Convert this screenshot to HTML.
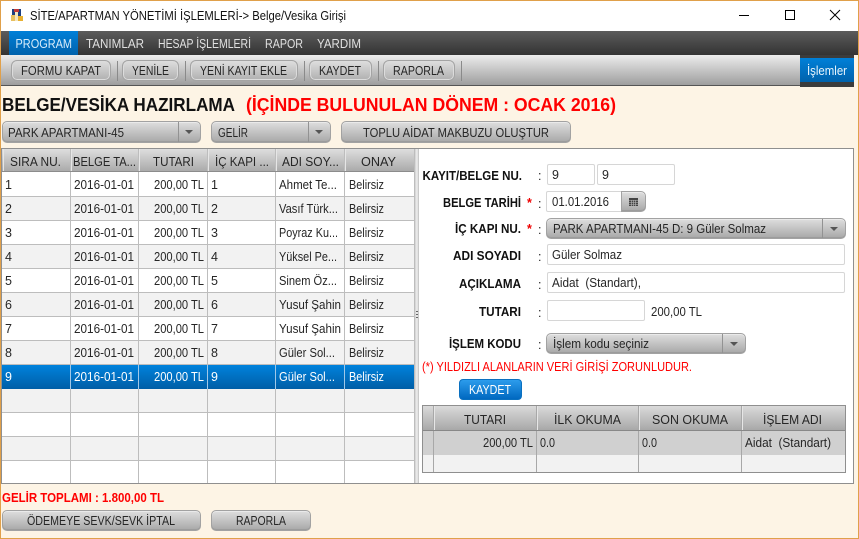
<!DOCTYPE html>
<html><head><meta charset="utf-8"><style>
html,body{margin:0;padding:0}
body{width:859px;height:539px;position:relative;overflow:hidden;background:#fdf4e5}
.b{position:absolute;box-sizing:border-box}
.btn{background:linear-gradient(#dedede,#a8a8a8);border:1px solid #a2a2a2;border-radius:5px;box-shadow:inset 0 1px 0 #eaeaea,inset 0 -1px 0 #9c9c9c}
.tb{background:linear-gradient(#dedede,#b0b0b0);border:1px solid #a4a4a4;border-radius:6px;box-shadow:inset 0 0 0 1px #dcdcdc}
.in{background:#fff;border:1px solid #d6d6d6;border-radius:2px}
.sep{position:absolute;width:1px;top:61px;height:20px;background:#8a8a8a}
.arw{position:absolute;width:0;height:0;border-left:4px solid transparent;border-right:4px solid transparent;border-top:4px solid #555}
.ad{position:absolute;width:1px;background:#929292}
svg.o{position:absolute;left:0;top:0}
svg text{font-family:"Liberation Sans",sans-serif;font-size:12.5px;fill:#262626;white-space:pre}
.x{font-weight:bold;fill:#111}
.r{fill:#f00}
</style></head><body>
<div class="b" style="left:0;top:0;width:859px;height:539px;border:1px solid #e0a04a;z-index:5;pointer-events:none"></div>
<div class="b" style="left:1px;top:1px;width:857px;height:30px;background:#fff"></div>
<div class="b" style="left:1px;top:31px;width:857px;height:24px;background:linear-gradient(#5c5c5c,#333)"></div>
<div class="b" style="left:9px;top:31px;width:69px;height:24px;background:linear-gradient(#0080d8,#0062ac)"></div>
<div class="b" style="left:1px;top:55px;width:853px;height:31px;background:linear-gradient(#ececec,#9e9e9e);border-bottom:1px solid #555"></div>
<div class="b tb" style="left:11px;top:60px;width:100px;height:21px"></div><div class="sep" style="left:117px"></div>
<div class="b tb" style="left:122px;top:60px;width:57px;height:21px"></div><div class="sep" style="left:185px"></div>
<div class="b tb" style="left:190px;top:60px;width:108px;height:21px"></div><div class="sep" style="left:304px"></div>
<div class="b tb" style="left:309px;top:60px;width:63px;height:21px"></div><div class="sep" style="left:378px"></div>
<div class="b tb" style="left:383px;top:60px;width:72px;height:21px"></div><div class="sep" style="left:461px"></div>
<div class="b" style="left:800px;top:55px;width:54px;height:32px;background:#3c3c3c"></div>
<div class="b" style="left:800px;top:58px;width:54px;height:24px;background:linear-gradient(#0080d8,#0062ac)"></div>
<svg class="o" style="z-index:1" width="30" height="30"><rect x="12" y="9" width="9" height="8" fill="#1c3f80"/><rect x="14" y="9" width="5" height="3" fill="#c23a3a"/><rect x="11" y="15" width="4" height="6" fill="#e8c060"/><rect x="15" y="12" width="3" height="9" fill="#f4e6c0"/><rect x="18" y="16" width="5" height="5" fill="#e8b030"/></svg>

<div class="b btn" style="left:2px;top:121px;width:199px;height:22px"></div><div class="ad" style="left:178px;top:122px;height:20px"></div><div class="arw" style="left:185px;top:130px"></div>
<div class="b btn" style="left:211px;top:121px;width:120px;height:22px"></div><div class="ad" style="left:308px;top:122px;height:20px"></div><div class="arw" style="left:315px;top:130px"></div>
<div class="b btn" style="left:341px;top:121px;width:230px;height:22px"></div>

<div class="b" style="left:1px;top:148px;width:853px;height:336px;background:#fff;border:1px solid #8f8f8f"></div>
<div class="b" style="left:2px;top:149px;width:412px;height:23px;background:linear-gradient(#dedede,#a8a8a8)"></div>
<div class="b" style="left:2px;top:197px;width:412px;height:24px;background:#f2f2f2"></div>
<div class="b" style="left:2px;top:245px;width:412px;height:24px;background:#f2f2f2"></div>
<div class="b" style="left:2px;top:293px;width:412px;height:24px;background:#f2f2f2"></div>
<div class="b" style="left:2px;top:341px;width:412px;height:24px;background:#f2f2f2"></div>
<div class="b" style="left:2px;top:389px;width:412px;height:24px;background:#f2f2f2"></div>
<div class="b" style="left:2px;top:437px;width:412px;height:24px;background:#f2f2f2"></div>
<svg class="o" style="z-index:1" width="859" height="539"><g stroke="#bdbdbd" stroke-width="1" shape-rendering="crispEdges">
<path d="M2 196.500H414M2 220.500H414M2 244.500H414M2 268.500H414M2 292.500H414M2 316.500H414M2 340.500H414M2 364.500H414M2 412.500H414M2 436.500H414M2 460.500H414"/>
<path d="M70.500 149V483M138.500 149V483M207.500 149V483M275.500 149V483M344.500 149V483M414.500 149V483"/></g>
<path stroke="#e6e6e6" d="M71.500 149V171M139.500 149V171M208.500 149V171M276.500 149V171M345.500 149V171M3.500 149V171" shape-rendering="crispEdges"/>
<path stroke="#8c8c8c" d="M2 171.500H414" shape-rendering="crispEdges"/></svg>
<div class="b" style="left:2px;top:365px;width:412px;height:24px;background:linear-gradient(#0082dc,#005ea6);z-index:2"></div>
<svg class="o" style="z-index:2" width="859" height="539"><path stroke="#a0c8e8" d="M70.500 365V389M138.500 365V389M207.500 365V389M275.500 365V389M344.500 365V389" shape-rendering="crispEdges"/></svg>

<div class="b" style="left:415px;top:149px;width:4px;height:334px;background:linear-gradient(90deg,#d0d0d0,#f0f0f0,#bcbcbc)"></div>
<div class="b" style="left:416px;top:311px;width:2px;height:8px;background:repeating-linear-gradient(#666 0 1px,transparent 1px 3px)"></div>

<div class="b in" style="left:547px;top:164px;width:48px;height:21px"></div>
<div class="b in" style="left:597px;top:164px;width:78px;height:21px"></div>
<div class="b in" style="left:546px;top:191px;width:80px;height:21px"></div>
<div class="b btn" style="left:621px;top:191px;width:25px;height:21px;border-radius:0 5px 5px 0"></div>
<svg class="o" style="z-index:1" width="859" height="539"><rect x="629" y="198" width="9" height="8" fill="#444"/><path d="M629 200.500H638M629 202.500H638M629 204.500H638M631.500 200V206M633.500 200V206M635.500 200V206" stroke="#bbb" stroke-width=".6"/></svg>
<div class="b btn" style="left:546px;top:218px;width:300px;height:21px"></div><div class="ad" style="left:822px;top:219px;height:19px"></div><div class="arw" style="left:830px;top:227px"></div>
<div class="b in" style="left:547px;top:244px;width:298px;height:21px"></div>
<div class="b in" style="left:547px;top:272px;width:298px;height:21px"></div>
<div class="b in" style="left:547px;top:300px;width:98px;height:21px"></div>
<div class="b btn" style="left:546px;top:333px;width:200px;height:21px"></div><div class="ad" style="left:722px;top:334px;height:19px"></div><div class="arw" style="left:730px;top:342px"></div>
<div class="b" style="left:459px;top:379px;width:63px;height:21px;border-radius:4px;background:linear-gradient(#2c9cec,#0068c0);border:1px solid #0a70c0"></div>

<div class="b" style="left:422px;top:405px;width:424px;height:68px;background:#fff;border:1px solid #8f8f8f"></div>
<div class="b" style="left:423px;top:406px;width:422px;height:25px;background:linear-gradient(#dadada,#a6a6a6)"></div>
<div class="b" style="left:423px;top:431px;width:422px;height:24px;background:#d0d0d0"></div>
<div class="b" style="left:423px;top:455px;width:422px;height:17px;background:#f2f2f2"></div>
<svg class="o" style="z-index:1" width="859" height="539"><path stroke="#a8a8a8" d="M433.500 406V472M536.500 406V472M638.500 406V472M741.500 406V472" shape-rendering="crispEdges"/><path stroke="#e6e6e6" d="M434.500 406V430M537.500 406V430M639.500 406V430M742.500 406V430" shape-rendering="crispEdges"/><path stroke="#888" d="M423 430.500H845" shape-rendering="crispEdges"/></svg>

<div class="b btn" style="left:2px;top:510px;width:199px;height:21px"></div>
<div class="b btn" style="left:211px;top:510px;width:100px;height:21px"></div>

<svg class="o" style="z-index:3" width="859" height="539">
<g stroke="#000" fill="none" stroke-width="1"><path d="M739 15.500H749" shape-rendering="crispEdges"/><rect x="785.500" y="10.500" width="9" height="9" shape-rendering="crispEdges"/><path d="M830 10L840 20M840 10L830 20"/></g>
<text x="30" y="20" textLength="316" lengthAdjust="spacingAndGlyphs" style="fill:#111">SİTE/APARTMAN YÖNETİMİ İŞLEMLERİ-&gt; Belge/Vesika Girişi</text>
<text x="15.500" y="48" textLength="56.500" lengthAdjust="spacingAndGlyphs" style="fill:#d8ecfa">PROGRAM</text>
<text x="86" y="48" textLength="58" lengthAdjust="spacingAndGlyphs" style="fill:#e0e0e0">TANIMLAR</text>
<text x="158" y="48" textLength="93" lengthAdjust="spacingAndGlyphs" style="fill:#e0e0e0">HESAP İŞLEMLERİ</text>
<text x="265" y="48" textLength="38" lengthAdjust="spacingAndGlyphs" style="fill:#e0e0e0">RAPOR</text>
<text x="317" y="48" textLength="44" lengthAdjust="spacingAndGlyphs" style="fill:#e0e0e0">YARDIM</text>
<text x="21" y="75" textLength="80" lengthAdjust="spacingAndGlyphs">FORMU KAPAT</text>
<text x="132" y="75" textLength="37" lengthAdjust="spacingAndGlyphs">YENİLE</text>
<text x="200" y="75" textLength="87" lengthAdjust="spacingAndGlyphs">YENİ KAYIT EKLE</text>
<text x="319" y="75" textLength="42" lengthAdjust="spacingAndGlyphs">KAYDET</text>
<text x="393" y="75" textLength="51" lengthAdjust="spacingAndGlyphs">RAPORLA</text>
<text x="807" y="75" textLength="40" lengthAdjust="spacingAndGlyphs" style="fill:#e8f4fc">İşlemler</text>
<text class="x" x="2" y="111" textLength="233" lengthAdjust="spacingAndGlyphs" style="font-size:18px">BELGE/VESİKA HAZIRLAMA</text>
<text class="x r" x="246" y="111" textLength="370" lengthAdjust="spacingAndGlyphs" style="font-size:18px;fill:#f00">(İÇİNDE BULUNULAN DÖNEM : OCAK 2016)</text>
<text x="8" y="137" textLength="116" lengthAdjust="spacingAndGlyphs">PARK APARTMANI-45</text>
<text x="218" y="137" textLength="30" lengthAdjust="spacingAndGlyphs">GELİR</text>
<text x="363" y="137" textLength="186" lengthAdjust="spacingAndGlyphs">TOPLU AİDAT MAKBUZU OLUŞTUR</text>

<text x="10" y="166" textLength="51" lengthAdjust="spacingAndGlyphs">SIRA NU.</text>
<text x="73" y="166" textLength="63" lengthAdjust="spacingAndGlyphs">BELGE TA...</text>
<text x="153" y="166" textLength="41" lengthAdjust="spacingAndGlyphs">TUTARI</text>
<text x="215" y="166" textLength="54" lengthAdjust="spacingAndGlyphs">İÇ KAPI ...</text>
<text x="282" y="166" textLength="57" lengthAdjust="spacingAndGlyphs">ADI SOY...</text>
<text x="361" y="166" textLength="35" lengthAdjust="spacingAndGlyphs">ONAY</text>

<text x="5" y="189">1</text><text x="74" y="189" textLength="60" lengthAdjust="spacingAndGlyphs">2016-01-01</text><text x="154" y="189" textLength="50" lengthAdjust="spacingAndGlyphs">200,00 TL</text><text x="211" y="189">1</text><text x="279" y="189" textLength="58" lengthAdjust="spacingAndGlyphs">Ahmet Te...</text><text x="349" y="189" textLength="35" lengthAdjust="spacingAndGlyphs">Belirsiz</text>
<text x="5" y="213">2</text><text x="74" y="213" textLength="60" lengthAdjust="spacingAndGlyphs">2016-01-01</text><text x="154" y="213" textLength="50" lengthAdjust="spacingAndGlyphs">200,00 TL</text><text x="211" y="213">2</text><text x="279" y="213" textLength="59" lengthAdjust="spacingAndGlyphs">Vasıf Türk...</text><text x="349" y="213" textLength="35" lengthAdjust="spacingAndGlyphs">Belirsiz</text>
<text x="5" y="237">3</text><text x="74" y="237" textLength="60" lengthAdjust="spacingAndGlyphs">2016-01-01</text><text x="154" y="237" textLength="50" lengthAdjust="spacingAndGlyphs">200,00 TL</text><text x="211" y="237">3</text><text x="279" y="237" textLength="59" lengthAdjust="spacingAndGlyphs">Poyraz Ku...</text><text x="349" y="237" textLength="35" lengthAdjust="spacingAndGlyphs">Belirsiz</text>
<text x="5" y="261">4</text><text x="74" y="261" textLength="60" lengthAdjust="spacingAndGlyphs">2016-01-01</text><text x="154" y="261" textLength="50" lengthAdjust="spacingAndGlyphs">200,00 TL</text><text x="211" y="261">4</text><text x="279" y="261" textLength="58" lengthAdjust="spacingAndGlyphs">Yüksel Pe...</text><text x="349" y="261" textLength="35" lengthAdjust="spacingAndGlyphs">Belirsiz</text>
<text x="5" y="285">5</text><text x="74" y="285" textLength="60" lengthAdjust="spacingAndGlyphs">2016-01-01</text><text x="154" y="285" textLength="50" lengthAdjust="spacingAndGlyphs">200,00 TL</text><text x="211" y="285">5</text><text x="279" y="285" textLength="58" lengthAdjust="spacingAndGlyphs">Sinem Öz...</text><text x="349" y="285" textLength="35" lengthAdjust="spacingAndGlyphs">Belirsiz</text>
<text x="5" y="309">6</text><text x="74" y="309" textLength="60" lengthAdjust="spacingAndGlyphs">2016-01-01</text><text x="154" y="309" textLength="50" lengthAdjust="spacingAndGlyphs">200,00 TL</text><text x="211" y="309">6</text><text x="279" y="309" textLength="62" lengthAdjust="spacingAndGlyphs">Yusuf Şahin</text><text x="349" y="309" textLength="35" lengthAdjust="spacingAndGlyphs">Belirsiz</text>
<text x="5" y="333">7</text><text x="74" y="333" textLength="60" lengthAdjust="spacingAndGlyphs">2016-01-01</text><text x="154" y="333" textLength="50" lengthAdjust="spacingAndGlyphs">200,00 TL</text><text x="211" y="333">7</text><text x="279" y="333" textLength="62" lengthAdjust="spacingAndGlyphs">Yusuf Şahin</text><text x="349" y="333" textLength="35" lengthAdjust="spacingAndGlyphs">Belirsiz</text>
<text x="5" y="357">8</text><text x="74" y="357" textLength="60" lengthAdjust="spacingAndGlyphs">2016-01-01</text><text x="154" y="357" textLength="50" lengthAdjust="spacingAndGlyphs">200,00 TL</text><text x="211" y="357">8</text><text x="279" y="357" textLength="56" lengthAdjust="spacingAndGlyphs">Güler Sol...</text><text x="349" y="357" textLength="35" lengthAdjust="spacingAndGlyphs">Belirsiz</text>
<text x="5" y="381" style="fill:#fff">9</text><text x="74" y="381" textLength="60" lengthAdjust="spacingAndGlyphs" style="fill:#fff">2016-01-01</text><text x="154" y="381" textLength="50" lengthAdjust="spacingAndGlyphs" style="fill:#fff">200,00 TL</text><text x="211" y="381" style="fill:#fff">9</text><text x="279" y="381" textLength="56" lengthAdjust="spacingAndGlyphs" style="fill:#fff">Güler Sol...</text><text x="349" y="381" textLength="35" lengthAdjust="spacingAndGlyphs" style="fill:#fff">Belirsiz</text>

<text class="x" x="2" y="502" textLength="162" lengthAdjust="spacingAndGlyphs" style="fill:#f00">GELİR TOPLAMI : 1.800,00 TL</text>
<text x="27" y="525" textLength="148" lengthAdjust="spacingAndGlyphs">ÖDEMEYE SEVK/SEVK İPTAL</text>
<text x="236" y="525" textLength="50" lengthAdjust="spacingAndGlyphs">RAPORLA</text>

<text class="x" x="422.500" y="180" textLength="99.500" lengthAdjust="spacingAndGlyphs">KAYIT/BELGE NU.</text><text x="538" y="180">:</text>
<text x="552" y="179">9</text><text x="602" y="179">9</text>
<text class="x" x="443" y="207" textLength="78" lengthAdjust="spacingAndGlyphs">BELGE TARİHİ</text><text class="x" x="527" y="207" style="fill:#e00">*</text><text x="538" y="208">:</text>
<text x="552" y="206" textLength="57" lengthAdjust="spacingAndGlyphs">01.01.2016</text>
<text class="x" x="455" y="233" textLength="66" lengthAdjust="spacingAndGlyphs">İÇ KAPI NU.</text><text class="x" x="527" y="233" style="fill:#e00">*</text><text x="538" y="234">:</text>
<text x="553" y="233" textLength="213" lengthAdjust="spacingAndGlyphs">PARK APARTMANI-45 D: 9 Güler Solmaz</text>
<text class="x" x="453" y="260" textLength="68" lengthAdjust="spacingAndGlyphs">ADI SOYADI</text><text x="538" y="261">:</text>
<text x="552" y="259" textLength="70" lengthAdjust="spacingAndGlyphs">Güler Solmaz</text>
<text class="x" x="459" y="288" textLength="62" lengthAdjust="spacingAndGlyphs">AÇIKLAMA</text><text x="538" y="289">:</text>
<text x="552" y="287" textLength="89" lengthAdjust="spacingAndGlyphs">Aidat  (Standart),</text>
<text class="x" x="479" y="316" textLength="42" lengthAdjust="spacingAndGlyphs">TUTARI</text><text x="538" y="317">:</text>
<text x="651" y="316" textLength="51" lengthAdjust="spacingAndGlyphs">200,00 TL</text>
<text class="x" x="449" y="348" textLength="72" lengthAdjust="spacingAndGlyphs">İŞLEM KODU</text><text x="538" y="349">:</text>
<text x="553" y="348" textLength="96" lengthAdjust="spacingAndGlyphs">İşlem kodu seçiniz</text>
<text x="422" y="371" textLength="270" lengthAdjust="spacingAndGlyphs" style="fill:#f00">(*) YILDIZLI ALANLARIN VERİ GİRİŞİ ZORUNLUDUR.</text>
<text x="469" y="394" textLength="42" lengthAdjust="spacingAndGlyphs" style="fill:#fff">KAYDET</text>
<text x="464" y="424" textLength="42" lengthAdjust="spacingAndGlyphs">TUTARI</text>
<text x="554" y="424" textLength="67" lengthAdjust="spacingAndGlyphs">İLK OKUMA</text>
<text x="652" y="424" textLength="76" lengthAdjust="spacingAndGlyphs">SON OKUMA</text>
<text x="763" y="424" textLength="59" lengthAdjust="spacingAndGlyphs">İŞLEM ADI</text>
<text x="483" y="447" textLength="50" lengthAdjust="spacingAndGlyphs">200,00 TL</text>
<text x="540" y="447" textLength="15" lengthAdjust="spacingAndGlyphs">0.0</text>
<text x="642" y="447" textLength="15" lengthAdjust="spacingAndGlyphs">0.0</text>
<text x="745" y="447" textLength="86" lengthAdjust="spacingAndGlyphs">Aidat  (Standart)</text>
</svg>
</body></html>
